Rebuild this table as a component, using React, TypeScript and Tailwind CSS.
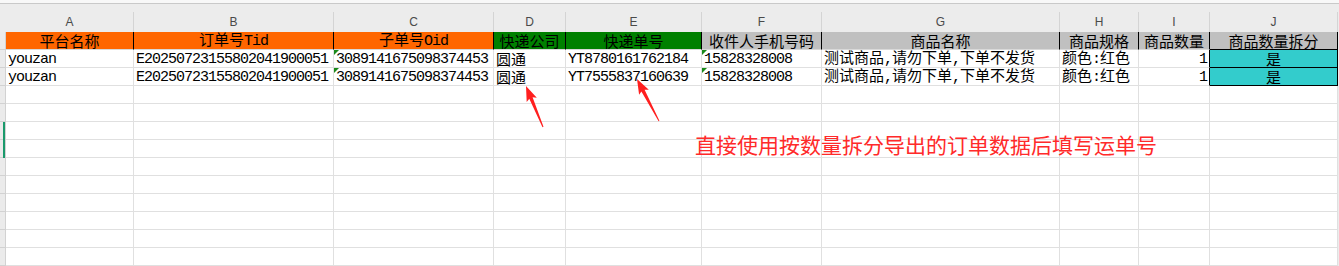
import React from "react";

const COLS = [
  { k: "A", w: "w-[128px]" },
  { k: "B", w: "w-[200px]" },
  { k: "C", w: "w-[160px]" },
  { k: "D", w: "w-[72px]" },
  { k: "E", w: "w-[136px]" },
  { k: "F", w: "w-[120px]" },
  { k: "G", w: "w-[238px]" },
  { k: "H", w: "w-[79px]" },
  { k: "I", w: "w-[71px]" },
  { k: "J", w: "w-[128px]" },
];

function T({ s }: { s: string }) {
  const parts = s.match(/[\x00-\x7F]+|[^\x00-\x7F]+/g) || [];
  return (
    <span className="whitespace-pre leading-[16px]">
      {parts.map((p, i) =>
        /^[\x00-\x7F]+$/.test(p) ? (
          <span
            key={i}
            className="font-[family-name:'Liberation_Mono',monospace] font-normal text-[15px] leading-[16px] tracking-[-1px]"
          >
            {p}
          </span>
        ) : (
          <span
            key={i}
            className="font-[family-name:'Noto_Sans_CJK_SC',sans-serif] font-normal text-[15px] leading-[16px]"
          >
            {p}
          </span>
        )
      )}
    </span>
  );
}

const headers: { t: string; bg: string }[] = [
  { t: "平台名称", bg: "bg-[#ff6600]" },
  { t: "订单号Tid", bg: "bg-[#ff6600]" },
  { t: "子单号Oid", bg: "bg-[#ff6600]" },
  { t: "快递公司", bg: "bg-[#008000]" },
  { t: "快递单号", bg: "bg-[#008000]" },
  { t: "收件人手机号码", bg: "bg-[#c0c0c0]" },
  { t: "商品名称", bg: "bg-[#c0c0c0]" },
  { t: "商品规格", bg: "bg-[#c0c0c0]" },
  { t: "商品数量", bg: "bg-[#c0c0c0]" },
  { t: "商品数量拆分", bg: "bg-[#c0c0c0]" },
];

const data = [
  [
    "youzan",
    "E20250723155802041900051",
    "3089141675098374453",
    "圆通",
    "YT8780161762184",
    "15828328008",
    "测试商品,请勿下单,下单不发货",
    "颜色:红色",
    "1",
    "是",
  ],
  [
    "youzan",
    "E20250723155802041900051",
    "3089141675098374453",
    "圆通",
    "YT7555837160639",
    "15828328008",
    "测试商品,请勿下单,下单不发货",
    "颜色:红色",
    "1",
    "是",
  ],
];

function Tri() {
  return (
    <svg className="absolute left-0 top-0" width="5" height="5" viewBox="0 0 5 5">
      <polygon points="0,0 5,0 0,5" fill="#1a8a1a" />
    </svg>
  );
}

function arrowPoints(tx: number, ty: number, sx: number, sy: number) {
  const dx = tx - sx;
  const dy = ty - sy;
  const L = Math.hypot(dx, dy);
  const ux = dx / L;
  const uy = dy / L;
  const px = -uy;
  const py = ux;
  const headLen = 13;
  const headW = 5.5;
  const neckW = 1.8;
  const tailW = 0.5;
  const bx = tx - ux * headLen;
  const by = ty - uy * headLen;
  const pts = [
    [sx + px * tailW, sy + py * tailW],
    [bx + px * neckW, by + py * neckW],
    [bx + px * headW - ux * 2, by + py * headW - uy * 2],
    [tx, ty],
    [bx - px * headW - ux * 2, by - py * headW - uy * 2],
    [bx - px * neckW, by - py * neckW],
    [sx - px * tailW, sy - py * tailW],
  ];
  return pts.map((p) => `${p[0].toFixed(1)},${p[1].toFixed(1)}`).join(" ");
}

function Gutter({ mark }: { mark?: boolean }) {
  return (
    <div className="relative w-[6px] shrink-0 h-full bg-[#ebebeb] border-b border-r border-[#d2d2d2]">
      {mark && <div className="absolute right-0 top-0 h-[18px] w-[2px] bg-[#1a9a6c]" />}
    </div>
  );
}

export default function App() {
  const emptyRows = Array.from({ length: 10 });
  return (
    <div className="relative w-[1339px] h-[266px] overflow-hidden bg-white">
      <div className="h-[3px] bg-[#f8f8f8]" />
      <div className="h-px bg-[#c9c9c9]" />
      <div className="h-[8px] bg-[#ececec]" />
      {/* column letters */}
      <div className="flex h-[20px] bg-[#ececec]">
        <div className="w-[6px] shrink-0" />
        {COLS.map((c) => (
          <div
            key={c.k}
            className={`${c.w} shrink-0 flex items-center justify-center border-r border-[#d4d4d4] font-[family-name:'Liberation_Sans',sans-serif] text-[12px] text-[#4a4a4a]`}
          >
            {c.k}
          </div>
        ))}
        <div className="flex-1" />
      </div>
      {/* header row */}
      <div className="flex h-[18px]">
        <Gutter />
        {headers.map((h, i) => (
          <div
            key={i}
            className={`${COLS[i].w} ${h.bg} shrink-0 flex items-center justify-center border-r border-r-black border-b ${
              i === 9 ? "border-b-black" : "border-b-[#d9d9d9]"
            } text-black`}
          >
            <T s={h.t} />
          </div>
        ))}
        <div className="flex-1 bg-[#ececec]" />
      </div>
      {/* data rows */}
      {data.map((row, r) => (
        <div key={r} className="flex h-[18px]">
          <Gutter />
          {row.map((v, i) => {
            const isJ = i === 9;
            const isI = i === 8;
            return (
              <div
                key={i}
                className={`${COLS[i].w} relative shrink-0 flex items-center text-black border-r border-b ${
                  isJ
                    ? "bg-[#33cccc] border-black justify-center"
                    : isI
                    ? "border-r-black border-b-[#e0e0e0] justify-end pr-[2px]"
                    : "border-[#e0e0e0] pl-[2px]"
                }`}
              >
                {(i === 2 || i === 5) && <Tri />}
                <T s={v} />
              </div>
            );
          })}
          <div className="flex-1 bg-[#ececec]" />
        </div>
      ))}
      {emptyRows.map((_, r) => (
        <div key={r} className="flex h-[18px]">
          <Gutter mark={r === 2 || r === 3} />
          {COLS.map((c) => (
            <div key={c.k} className={`${c.w} shrink-0 border-r border-b border-[#e0e0e0]`} />
          ))}
          <div className="flex-1 bg-[#ececec]" />
        </div>
      ))}

      {/* annotations */}
      <svg
        className="absolute left-0 top-0 pointer-events-none"
        width="1339"
        height="266"
        viewBox="0 0 1339 266"
      >
        <polygon points={arrowPoints(526, 86, 543, 127)} fill="#ff1f1f" />
        <polygon points={arrowPoints(637, 79, 659, 121)} fill="#ff1f1f" />
      </svg>
      <div className="absolute left-[695px] top-[132px] font-[family-name:'Noto_Sans_CJK_SC',sans-serif] text-[21px] leading-[24px] text-[#ff2a2a] whitespace-nowrap">
        直接使用按数量拆分导出的订单数据后填写运单号
      </div>
    </div>
  );
}
